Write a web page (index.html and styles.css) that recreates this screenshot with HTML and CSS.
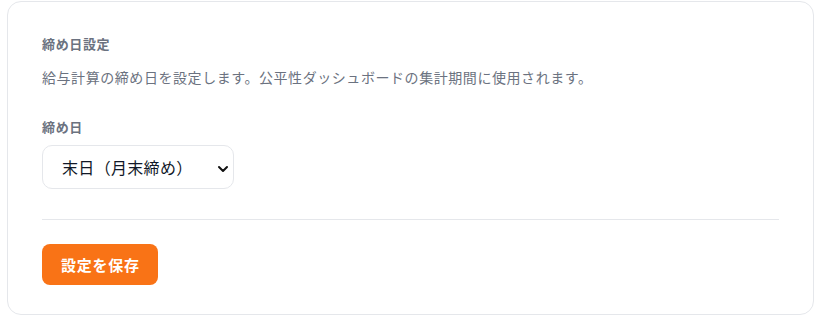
FILE: index.html
```html
<!DOCTYPE html>
<html lang="ja">
<head>
    <meta charset="utf-8">
    <title>締め日設定</title>
    <link rel="stylesheet" href="styles.css">
</head>
<body>
    <div class="settings-card">
        <h2 class="section-title">締め日設定</h2>
        <p class="section-desc">給与計算の締め日を設定します。公平性ダッシュボードの集計期間に使用されます。</p>

        <label class="field-label" for="closingDay">締め日</label>
        <div class="select-wrap">
            <select id="closingDay" class="closing-select">
                <option>末日（月末締め）</option>
                <option>15日</option>
                <option>20日</option>
                <option>25日</option>
            </select>
            <svg class="select-chevron" width="12" height="12" viewBox="0 0 12 12" aria-hidden="true">
                <path d="M2 4l4 4 4-4" fill="none" stroke="#111111" stroke-width="2" stroke-linecap="round" stroke-linejoin="round"/>
            </svg>
        </div>

        <hr class="divider">

        <button class="save-button">設定を保存</button>
    </div>
</body>
</html>
```

FILE: styles.css
```css
:root {
    --primary-color: #f97316;
    --text-color: #111827;
    --muted-color: #6b7280;
    --label-color: #6b7280;
    --border-color: #e5e7eb;
}

body {
    font-family: "Noto Sans CJK JP", "Noto Sans", sans-serif;
    margin: 0;
    padding: 0;
    background-color: #ffffff;
}

.settings-card {
    margin: 1px 8px 0 7px;
    padding: 32px 34px 29px;
    border: 1px solid var(--border-color);
    border-radius: 14px;
    background-color: white;
}

.section-title {
    margin: 0;
    font-size: 13px;
    line-height: 20px;
    font-weight: bold;
    letter-spacing: 0.05em;
    color: var(--label-color);
}

.section-desc {
    margin: 12px 0 0;
    font-size: 14px;
    line-height: 22px;
    color: var(--muted-color);
    letter-spacing: 0.04em;
}

.field-label {
    display: block;
    margin-top: 29px;
    font-size: 13px;
    line-height: 20px;
    font-weight: bold;
    letter-spacing: 0.05em;
    color: var(--label-color);
}

.select-wrap {
    position: relative;
    width: 192px;
    margin-top: 8px;
}

.closing-select {
    appearance: none;
    -webkit-appearance: none;
    width: 100%;
    height: 44px;
    padding: 0 36px 0 19px;
    border: 1px solid var(--border-color);
    border-radius: 10px;
    background-color: white;
    font-family: inherit;
    font-size: 16px;
    letter-spacing: 0.02em;
    color: var(--text-color);
    outline: none;
}

.select-chevron {
    position: absolute;
    right: 5px;
    top: 18px;
    pointer-events: none;
}

.divider {
    margin: 30px 0 0;
    border: none;
    border-top: 1px solid var(--border-color);
}

.save-button {
    margin-top: 24px;
    height: 41px;
    padding: 0 18px 0 19px;
    border: none;
    border-radius: 8px;
    background-color: var(--primary-color);
    color: white;
    font-family: inherit;
    font-size: 15px;
    font-weight: bold;
    letter-spacing: 0.05em;
    cursor: pointer;
}
```
